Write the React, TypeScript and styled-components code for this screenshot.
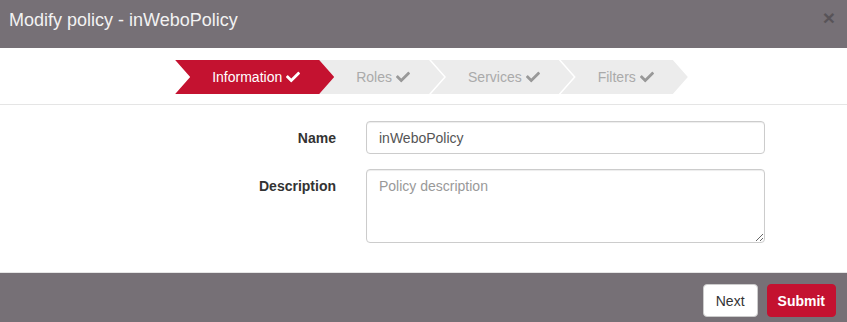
import styled, { createGlobalStyle } from "styled-components";
import { FaCheck } from "react-icons/fa";

const GlobalStyle = createGlobalStyle`
  html, body {
    margin: 0;
    padding: 0;
    background: #ffffff;
  }
  body {
    font-family: "Liberation Sans", Arial, sans-serif;
    font-size: 14px;
    color: #333333;
  }
  * {
    box-sizing: border-box;
  }
`;

const steps = ["Information", "Roles", "Services", "Filters"];

function App() {
  return (
    <Modal>
      <GlobalStyle />
      <Header>
        <Title>Modify policy - inWeboPolicy</Title>
        <Close type="button">×</Close>
      </Header>

      <Body>
        <StepBar>
          {steps.map((step, i) => (
            <Step key={step} $active={i === 0}>
              {step}
              <Check $active={i === 0}>
                <FaCheck />
              </Check>
            </Step>
          ))}
        </StepBar>
        <Divider />

        <Form>
          <Label htmlFor="name">Name</Label>
          <Input id="name" type="text" defaultValue="inWeboPolicy" />
          <Label htmlFor="desc">Description</Label>
          <TextArea id="desc" placeholder="Policy description" />
        </Form>
      </Body>

      <Footer>
        <Button>Next</Button>
        <Button $primary>Submit</Button>
      </Footer>
    </Modal>
  );
}

export default App;

const Modal = styled.div`
  width: 847px;
  display: flex;
  flex-direction: column;
`;

const Header = styled.div`
  height: 48px;
  background: #767076;
  display: flex;
  justify-content: space-between;
  align-items: flex-start;
  padding: 10px 12px 0 9px;
`;

const Title = styled.h4`
  margin: 0;
  font-size: 18px;
  font-weight: normal;
  line-height: 20px;
  color: #f2f2f2;
`;

const Close = styled.button`
  margin-top: -2px;
  padding: 0;
  border: 0;
  background: transparent;
  font-family: "Liberation Sans", Arial, sans-serif;
  font-size: 21px;
  font-weight: bold;
  line-height: 20px;
  color: #000000;
  opacity: 0.25;
  cursor: pointer;
`;

const Body = styled.div`
  padding-top: 12px;
  padding-bottom: 29px;
`;

const StepBar = styled.ul`
  list-style: none;
  margin: 0;
  padding: 0 0 0 3px;
  display: flex;
  justify-content: center;
`;

const Step = styled.li<{ $active?: boolean }>`
  position: relative;
  z-index: ${(p) => (p.$active ? 2 : 1)};
  display: flex;
  align-items: center;
  height: 34px;
  padding: 0 34px 0 37px;
  margin-right: ${(p) => (p.$active ? "-15px" : "-13px")};
  background: ${(p) => (p.$active ? "#c41230" : "#ececec")};
  color: ${(p) => (p.$active ? "#ffffff" : "#aaaaaa")};
  font-size: 14px;
  clip-path: polygon(
    0 0,
    calc(100% - 15px) 0,
    100% 50%,
    calc(100% - 15px) 100%,
    0 100%,
    15px 50%
  );
`;

const Check = styled.span<{ $active?: boolean }>`
  display: inline-flex;
  margin-left: 4px;
  font-size: 14px;
  color: ${(p) => (p.$active ? "#ffffff" : "#999999")};
`;

const Divider = styled.div`
  margin-top: 10px;
  border-top: 1px solid #e5e5e5;
`;

const Form = styled.div`
  display: grid;
  grid-template-columns: 336px 399px;
  column-gap: 30px;
  row-gap: 15px;
  padding-top: 16px;
`;

const Label = styled.label`
  text-align: right;
  font-weight: bold;
  padding-top: 7px;
  line-height: 20px;
  color: #333333;
`;

const Input = styled.input`
  height: 33px;
  padding: 6px 12px;
  border: 1px solid #cccccc;
  border-radius: 4px;
  font-family: "Liberation Sans", Arial, sans-serif;
  font-size: 14px;
  line-height: 20px;
  color: #555555;
  box-shadow: inset 0 1px 1px rgba(0, 0, 0, 0.075);
  outline: none;
`;

const TextArea = styled.textarea`
  height: 74px;
  padding: 6px 12px;
  border: 1px solid #cccccc;
  border-radius: 4px;
  font-family: "Liberation Sans", Arial, sans-serif;
  font-size: 14px;
  line-height: 20px;
  color: #555555;
  box-shadow: inset 0 1px 1px rgba(0, 0, 0, 0.075);
  outline: none;

  &::placeholder {
    color: #999999;
  }
`;

const Footer = styled.div`
  border-top: 1px solid #e5e5e5;
  background: #767076;
  display: flex;
  justify-content: flex-end;
  gap: 9px;
  padding: 11px 11px 15px;
`;

const Button = styled.button<{ $primary?: boolean }>`
  height: 33px;
  padding: 6px ${(p) => (p.$primary ? "10px" : "12px")};
  border: 1px solid ${(p) => (p.$primary ? "#c41230" : "#cccccc")};
  border-radius: 4px;
  background: ${(p) => (p.$primary ? "#c41230" : "#ffffff")};
  color: ${(p) => (p.$primary ? "#ffffff" : "#333333")};
  font-family: "Liberation Sans", Arial, sans-serif;
  font-size: 14px;
  font-weight: ${(p) => (p.$primary ? "bold" : "normal")};
  line-height: 20px;
  cursor: pointer;
`;
